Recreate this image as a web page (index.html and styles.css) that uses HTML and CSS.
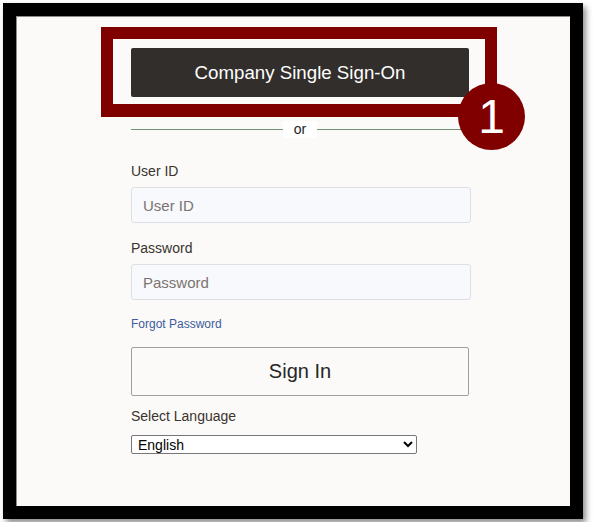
FILE: index.html
```html
<!DOCTYPE html>
<html lang="en">
<head>
    <meta charset="UTF-8">
    <title>Sign In</title>
    <link rel="stylesheet" href="styles.css">
</head>
<body>

<div class="frame">
    <div class="panel">
        <div class="login">
            <button class="sso-btn">Company Single Sign-On</button>

            <div class="divider">
                <span class="line"></span>
                <span class="or">or</span>
                <span class="line"></span>
            </div>

            <label class="field-label" for="userId">User ID</label>
            <input class="field" type="text" id="userId" placeholder="User ID">

            <label class="field-label pw-label" for="password">Password</label>
            <input class="field" type="password" id="password" placeholder="Password">

            <a class="forgot" href="#">Forgot Password</a>

            <button class="signin-btn">Sign In</button>

            <label class="field-label lang-label" for="lang">Select Language</label>
            <select class="lang" id="lang">
                <option>English</option>
            </select>
        </div>

        <!-- callout marking the SSO button -->
        <div class="callout-box"></div>
        <div class="callout-num">1</div>
    </div>
</div>

</body>
</html>
```

FILE: styles.css
```css
body {
    margin: 0;
    background-color: #ffffff;
    font-family: "Liberation Sans", Arial, sans-serif;
}
.frame {
    margin: 3px;
    width: 580px;
    height: 516px;
    box-sizing: border-box;
    border: 13px solid #000;
    box-shadow: 3px 4px 6px rgba(0, 0, 0, 0.45);
}
.panel {
    position: relative;
    height: 100%;
    background-color: #fbfaf8;
    border-top: 1px solid #8a8a8a;
    border-left: 1px solid #8a8a8a;
    box-sizing: border-box;
}
.login {
    display: flex;
    flex-direction: column;
    align-items: flex-start;
    width: 340px;
    padding: 31px 0 0 114px;
}
.sso-btn {
    width: 338px;
    height: 49px;
    background-color: #322e2b;
    color: #fff;
    border: none;
    border-radius: 2px;
    font-family: inherit;
    font-size: 18.7px;
}
.divider {
    display: flex;
    align-items: center;
    width: 338px;
    height: 17px;
    margin-top: 24px;
}
.divider .line {
    flex: 1;
    height: 1px;
    background-color: #6f9270;
}
.divider .or {
    padding: 0 11px;
    background-color: #fff;
    font-size: 14px;
    line-height: 17px;
    color: #222;
}
.field-label {
    margin-top: 25px;
    font-size: 14px;
    line-height: 16px;
    color: #3a332e;
}
.pw-label {
    margin-top: 17px;
}
.field {
    margin-top: 8px;
    width: 340px;
    height: 36px;
    box-sizing: border-box;
    padding: 0 11px;
    border: 1px solid #dedfe2;
    border-radius: 3px;
    background-color: #f8f9fc;
    font-family: inherit;
    font-size: 15px;
}
.field::placeholder {
    color: #7a7470;
}
.forgot {
    margin-top: 17px;
    font-size: 12px;
    line-height: 14px;
    color: #3e5b9c;
    text-decoration: none;
}
.signin-btn {
    margin-top: 16px;
    width: 338px;
    height: 49px;
    background-color: #fbfaf8;
    border: 1px solid #a0a0a0;
    border-radius: 2px;
    font-family: inherit;
    font-size: 20px;
    color: #262626;
}
.lang-label {
    margin-top: 12px;
}
.lang {
    margin-top: 11px;
    width: 286px;
    height: 19px;
    padding: 0 2px;
    border: 1px solid #777;
    border-radius: 2px;
    background-color: #fff;
    font-family: inherit;
    font-size: 14px;
    color: #000;
}
.callout-box {
    position: absolute;
    left: 84px;
    top: 10px;
    width: 396px;
    height: 90px;
    box-sizing: border-box;
    border: 12px solid #800000;
    border-bottom-width: 13px;
}
.callout-num {
    position: absolute;
    left: 441px;
    top: 66px;
    width: 67px;
    height: 67px;
    border-radius: 50%;
    background-color: #800000;
    color: #fff;
    font-size: 48px;
    line-height: 67px;
    text-align: center;
}
```
